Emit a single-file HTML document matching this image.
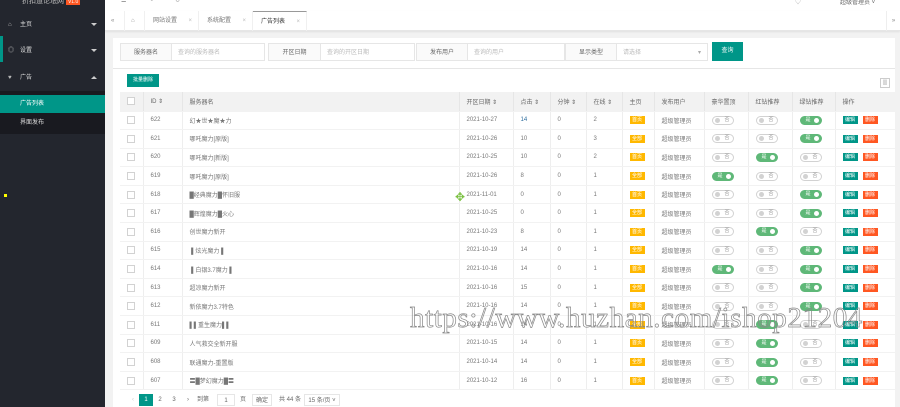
<!DOCTYPE html>
<html><head><meta charset="utf-8">
<style>
*{margin:0;padding:0;box-sizing:border-box}
body{width:900px;height:407px;overflow:hidden;background:#f2f2f2;font-family:"Liberation Sans","Noto Sans CJK SC",sans-serif;font-size:6px;color:#666;position:relative}
.side{position:absolute;left:0;top:0;width:105px;height:407px;background:#23262e}
.side .it{position:absolute;left:0;width:105px;height:26px;line-height:26px;color:#ddd;padding-left:20px;font-size:6px}
.side .it i{position:absolute;left:8px;top:0;color:#bbb;font-style:normal}
.side .arr{position:absolute;right:8px;top:11px;width:0;height:0;border-left:3px solid transparent;border-right:3px solid transparent;border-top:3px solid #ccc}
.side .up{border-top:none;border-bottom:3px solid #ccc}
.top{position:absolute;left:105px;top:0;right:0;height:11px;background:#fff}
.tabs{position:absolute;left:105px;top:11px;right:0;height:20px;background:#fff;border-bottom:1px solid #e6e6e6;box-shadow:0 1px 2px rgba(0,0,0,.08)}
.tab{position:absolute;top:0;height:20px;line-height:20px;border-right:1px solid #f0f0f0;color:#777;padding-left:8px}
.tab b{font-weight:normal;color:#bbb;position:absolute;right:6px}
.srch{position:absolute;left:113px;top:38px;width:782px;height:30px;background:#fff}
.lab{position:absolute;top:5px;height:18px;line-height:18px;border:1px solid #e6e6e6;background:#fafafa;text-align:center;color:#666}
.inp{position:absolute;top:5px;height:18px;line-height:18px;border:1px solid #e6e6e6;border-left:none;background:#fff;color:#bbb;padding-left:6px}
.btn{position:absolute;background:#009688;color:#fff;text-align:center}
.card{position:absolute;left:113px;top:68px;width:782px;height:339px;background:#fff;border-top:1px solid #e6e6e6}
table{position:absolute;left:7px;top:23px;border-collapse:collapse;table-layout:fixed;width:775px}
td,th{height:18.6px;border-bottom:1px solid #f2f2f2;font-weight:normal;text-align:left;padding-left:7px;white-space:nowrap;overflow:hidden;color:#777}
th{background:#f2f2f2;border-left:1px solid #e6e6e6;height:19px;color:#666}
td.b{border-left:1px solid #eee}
.cb{display:inline-block;width:8px;height:8px;border:1px solid #d2d2d2;background:#fff;vertical-align:middle}
.bd{display:inline-block;width:15px;height:8px;line-height:8px;background:#ffb800;color:#fff;font-size:5px;text-align:center}
.sw{display:inline-block;width:22px;height:9px;border-radius:5px;border:1px solid #d2d2d2;position:relative;vertical-align:middle;background:#fff;font-size:5px;color:#999;line-height:7px;padding-left:12px}
.sw:before{content:"";position:absolute;left:2px;top:1px;width:5px;height:5px;border-radius:50%;background:#d2d2d2}
.sw.on{background:#5fb878;border-color:#5fb878;color:#fff;padding-left:5px}
.sw.on:before{left:auto;right:2px;background:#fff}
.op{display:inline-block;width:15px;height:8px;line-height:8px;font-size:5px;color:#fff;text-align:center;background:#009688;margin-right:5px}
.op.r{background:#ff5722}
.pg{position:absolute;top:325px;height:12px;line-height:12px;text-align:center;color:#666}
.wm{position:absolute;left:410px;top:302px;font-family:"Liberation Serif",serif;font-size:29px;color:transparent;-webkit-text-stroke:0.7px #888;letter-spacing:0.6px;white-space:nowrap}
</style></head><body>
<div class="side">
 <div style="position:absolute;left:22px;top:-4px;color:#bbb;font-size:7px">折扣道论坛网 <span style="background:#ff5722;color:#fff;padding:0 2px;font-size:5px">V1.0</span></div>
 <div class="it" style="top:12px"><i>⌂</i>主页<span class="arr"></span></div>
 <div style="position:absolute;left:0;top:36px;width:3px;height:26px;background:#009688"></div>
 <div class="it" style="top:38px"><i>◎</i>设置<span class="arr"></span></div>
 <div class="it" style="top:65px"><i>♥</i>广告<span class="arr up"></span></div>
 <div style="position:absolute;left:0;top:91px;width:105px;height:43px;background:#191a20"></div>
 <div class="it" style="top:95px;height:18px;line-height:18px;background:#009688;color:#fff">广告列表</div>
 <div class="it" style="top:114px;height:18px;line-height:18px">界面发布</div>
 <div style="position:absolute;left:4px;top:194px;width:3px;height:3px;background:#ff0"></div>
</div>
<div class="top">
 <span style="position:absolute;left:16px;top:-3px;color:#666">☰</span>
 <span style="position:absolute;left:45px;top:-3px;color:#999">●</span>
 <span style="position:absolute;left:70px;top:-3px;color:#999">↻</span>
 <span style="position:absolute;left:690px;top:-3px;color:#999">♡</span>
 <span style="position:absolute;left:735px;top:-3px;color:#666">超级管理员 ˅</span>
</div>
<div class="tabs">
 <div class="tab" style="left:0;width:20px;padding-left:6px;color:#888">«</div>
 <div class="tab" style="left:20px;width:20px;padding-left:6px;color:#999">⌂</div>
 <div class="tab" style="left:40px;width:54px">网站设置<b>×</b></div>
 <div class="tab" style="left:94px;width:54px">系统配置<b>×</b></div>
 <div class="tab" style="left:148px;width:54px;border-top:1px solid #999;color:#333">广告列表<b>×</b></div>
 <div style="position:absolute;right:0;top:0;width:14px;height:20px;line-height:20px;border-left:1px solid #eee;color:#888;text-align:center">»</div>
</div>
<div class="srch">
 <div class="lab" style="left:7px;width:52px">服务器名</div><div class="inp" style="left:59px;width:93px">查询的服务器名</div>
 <div class="lab" style="left:155px;width:53px">开区日期</div><div class="inp" style="left:208px;width:94px">查询的开区日期</div>
 <div class="lab" style="left:303px;width:52px">发布用户</div><div class="inp" style="left:355px;width:97px">查询的用户</div>
 <div class="lab" style="left:452px;width:52px">显示类型</div><div class="inp" style="left:504px;width:91px">请选择<span style="position:absolute;right:6px;color:#aaa">▾</span></div>
 <div class="btn" style="left:599px;top:4px;width:31px;height:19px;line-height:19px">查询</div>
</div>
<div class="card">
 <div class="btn" style="left:14px;top:5px;width:32px;height:13px;line-height:13px;font-size:5px">批量删除</div>
 <div style="position:absolute;right:5px;top:9px;width:10px;height:10px;border:1px solid #ccc;font-size:5px;text-align:center;line-height:8px">▥</div>
 <table>
 <colgroup><col style="width:23px"><col style="width:39px"><col style="width:277px"><col style="width:54px"><col style="width:37px"><col style="width:36px"><col style="width:36px"><col style="width:32px"><col style="width:50px"><col style="width:44px"><col style="width:44px"><col style="width:43px"><col style="width:60px"></colgroup>
 <tr><th style="border-left:none"><span class="cb"></span></th><th>ID ⇕</th><th>服务器名</th><th>开区日期 ⇕</th><th>点击 ⇕</th><th>分钟 ⇕</th><th>在线 ⇕</th><th>主页</th><th>发布用户</th><th>豪华置顶</th><th>红钻推荐</th><th>绿钻推荐</th><th>操作</th></tr>
 <tr><td><span class="cb"></span></td><td class="b">622</td><td class="b">幻★世★魔★力</td><td class="b">2021-10-27</td><td class="b" style="color:#2f6f9f">14</td><td class="b">0</td><td class="b">2</td><td class="b"><span class="bd">首页</span></td><td class="b">超级管理员</td><td class="b"><span class="sw">否</span></td><td class="b"><span class="sw">否</span></td><td class="b"><span class="sw on">是</span></td><td class="b"><span class="op">编辑</span><span class="op r">删除</span></td></tr>
 <tr><td><span class="cb"></span></td><td class="b">621</td><td class="b">哪吒魔力[原版]</td><td class="b">2021-10-26</td><td class="b">10</td><td class="b">0</td><td class="b">3</td><td class="b"><span class="bd">全部</span></td><td class="b">超级管理员</td><td class="b"><span class="sw">否</span></td><td class="b"><span class="sw">否</span></td><td class="b"><span class="sw on">是</span></td><td class="b"><span class="op">编辑</span><span class="op r">删除</span></td></tr>
 <tr><td><span class="cb"></span></td><td class="b">620</td><td class="b">哪吒魔力[新版]</td><td class="b">2021-10-25</td><td class="b">10</td><td class="b">0</td><td class="b">2</td><td class="b"><span class="bd">首页</span></td><td class="b">超级管理员</td><td class="b"><span class="sw">否</span></td><td class="b"><span class="sw on">是</span></td><td class="b"><span class="sw">否</span></td><td class="b"><span class="op">编辑</span><span class="op r">删除</span></td></tr>
 <tr><td><span class="cb"></span></td><td class="b">619</td><td class="b">哪吒魔力[原版]</td><td class="b">2021-10-26</td><td class="b">8</td><td class="b">0</td><td class="b">1</td><td class="b"><span class="bd">全部</span></td><td class="b">超级管理员</td><td class="b"><span class="sw on">是</span></td><td class="b"><span class="sw">否</span></td><td class="b"><span class="sw">否</span></td><td class="b"><span class="op">编辑</span><span class="op r">删除</span></td></tr>
 <tr><td><span class="cb"></span></td><td class="b">618</td><td class="b">█经典魔力█怀旧服</td><td class="b">2021-11-01</td><td class="b">0</td><td class="b">0</td><td class="b">1</td><td class="b"><span class="bd">首页</span></td><td class="b">超级管理员</td><td class="b"><span class="sw">否</span></td><td class="b"><span class="sw">否</span></td><td class="b"><span class="sw on">是</span></td><td class="b"><span class="op">编辑</span><span class="op r">删除</span></td></tr>
 <tr><td><span class="cb"></span></td><td class="b">617</td><td class="b">█辉煌魔力█火心</td><td class="b">2021-10-25</td><td class="b">0</td><td class="b">0</td><td class="b">1</td><td class="b"><span class="bd">全部</span></td><td class="b">超级管理员</td><td class="b"><span class="sw">否</span></td><td class="b"><span class="sw">否</span></td><td class="b"><span class="sw on">是</span></td><td class="b"><span class="op">编辑</span><span class="op r">删除</span></td></tr>
 <tr><td><span class="cb"></span></td><td class="b">616</td><td class="b">创世魔力新开</td><td class="b">2021-10-23</td><td class="b">8</td><td class="b">0</td><td class="b">1</td><td class="b"><span class="bd">首页</span></td><td class="b">超级管理员</td><td class="b"><span class="sw">否</span></td><td class="b"><span class="sw on">是</span></td><td class="b"><span class="sw">否</span></td><td class="b"><span class="op">编辑</span><span class="op r">删除</span></td></tr>
 <tr><td><span class="cb"></span></td><td class="b">615</td><td class="b">&nbsp;▌炫光魔力 ▌</td><td class="b">2021-10-19</td><td class="b">14</td><td class="b">0</td><td class="b">1</td><td class="b"><span class="bd">全部</span></td><td class="b">超级管理员</td><td class="b"><span class="sw">否</span></td><td class="b"><span class="sw">否</span></td><td class="b"><span class="sw on">是</span></td><td class="b"><span class="op">编辑</span><span class="op r">删除</span></td></tr>
 <tr><td><span class="cb"></span></td><td class="b">614</td><td class="b">&nbsp;▌白银3.7魔力 ▌</td><td class="b">2021-10-16</td><td class="b">14</td><td class="b">0</td><td class="b">1</td><td class="b"><span class="bd">首页</span></td><td class="b">超级管理员</td><td class="b"><span class="sw on">是</span></td><td class="b"><span class="sw">否</span></td><td class="b"><span class="sw on">是</span></td><td class="b"><span class="op">编辑</span><span class="op r">删除</span></td></tr>
 <tr><td><span class="cb"></span></td><td class="b">613</td><td class="b">超凉魔力新开</td><td class="b">2021-10-16</td><td class="b">15</td><td class="b">0</td><td class="b">1</td><td class="b"><span class="bd">全部</span></td><td class="b">超级管理员</td><td class="b"><span class="sw">否</span></td><td class="b"><span class="sw">否</span></td><td class="b"><span class="sw on">是</span></td><td class="b"><span class="op">编辑</span><span class="op r">删除</span></td></tr>
 <tr><td><span class="cb"></span></td><td class="b">612</td><td class="b">新依魔力3.7特色</td><td class="b">2021-10-16</td><td class="b">14</td><td class="b">0</td><td class="b">1</td><td class="b"><span class="bd">首页</span></td><td class="b">超级管理员</td><td class="b"><span class="sw">否</span></td><td class="b"><span class="sw">否</span></td><td class="b"><span class="sw on">是</span></td><td class="b"><span class="op">编辑</span><span class="op r">删除</span></td></tr>
 <tr><td><span class="cb"></span></td><td class="b">611</td><td class="b">▌▌重生魔力▌▌</td><td class="b">2021-10-16</td><td class="b">14</td><td class="b">0</td><td class="b">1</td><td class="b"><span class="bd">全部</span></td><td class="b">超级管理员</td><td class="b"><span class="sw">否</span></td><td class="b"><span class="sw on">是</span></td><td class="b"><span class="sw">否</span></td><td class="b"><span class="op">编辑</span><span class="op r">删除</span></td></tr>
 <tr><td><span class="cb"></span></td><td class="b">609</td><td class="b">人气救交全新开服</td><td class="b">2021-10-15</td><td class="b">14</td><td class="b">0</td><td class="b">1</td><td class="b"><span class="bd">首页</span></td><td class="b">超级管理员</td><td class="b"><span class="sw">否</span></td><td class="b"><span class="sw on">是</span></td><td class="b"><span class="sw">否</span></td><td class="b"><span class="op">编辑</span><span class="op r">删除</span></td></tr>
 <tr><td><span class="cb"></span></td><td class="b">608</td><td class="b">联通魔力-重置版</td><td class="b">2021-10-14</td><td class="b">14</td><td class="b">0</td><td class="b">1</td><td class="b"><span class="bd">全部</span></td><td class="b">超级管理员</td><td class="b"><span class="sw">否</span></td><td class="b"><span class="sw on">是</span></td><td class="b"><span class="sw">否</span></td><td class="b"><span class="op">编辑</span><span class="op r">删除</span></td></tr>
 <tr><td><span class="cb"></span></td><td class="b">607</td><td class="b">〓█梦幻魔力█〓</td><td class="b">2021-10-12</td><td class="b">16</td><td class="b">0</td><td class="b">1</td><td class="b"><span class="bd">首页</span></td><td class="b">超级管理员</td><td class="b"><span class="sw">否</span></td><td class="b"><span class="sw on">是</span></td><td class="b"><span class="sw">否</span></td><td class="b"><span class="op">编辑</span><span class="op r">删除</span></td></tr>
 </table>
 <div class="pg" style="left:14px;width:12px;color:#ccc">‹</div>
 <div class="pg" style="left:26px;width:14px;background:#009688;color:#fff">1</div>
 <div class="pg" style="left:41px;width:12px">2</div>
 <div class="pg" style="left:55px;width:12px">3</div>
 <div class="pg" style="left:69px;width:12px">›</div>
 <div class="pg" style="left:80px;width:20px">到第</div>
 <div class="pg" style="left:104px;width:18px;border:1px solid #e6e6e6">1</div>
 <div class="pg" style="left:124px;width:12px">页</div>
 <div class="pg" style="left:139px;width:20px;border:1px solid #e6e6e6">确定</div>
 <div class="pg" style="left:163px;width:28px">共 44 条</div>
 <div class="pg" style="left:191px;width:36px;border:1px solid #e6e6e6">15 条/页 ˅</div>
</div>
<div class="wm">https://www.huzhan.com/ishop21204</div>
<div style="position:absolute;left:455px;top:191px;color:#7bc142;font-size:12px;line-height:12px">✥</div>
</body></html>
